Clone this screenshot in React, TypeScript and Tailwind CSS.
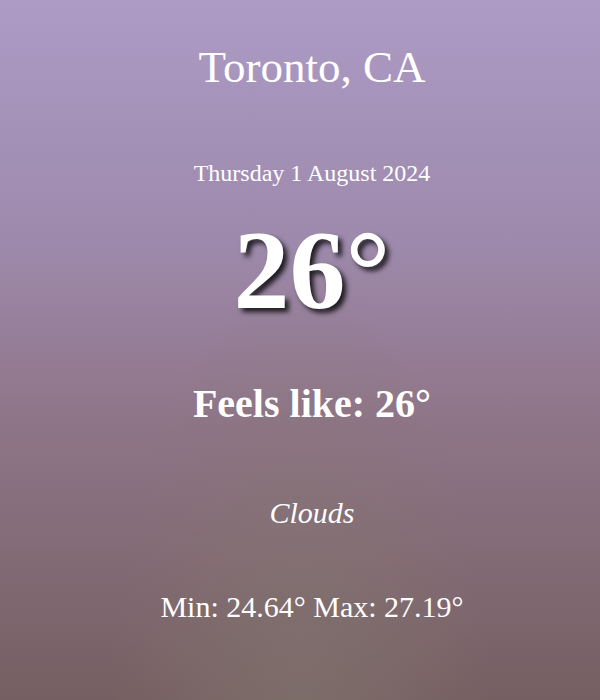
export default function App() {
  return (
    <div className="relative h-[700px] w-full overflow-hidden bg-[linear-gradient(180deg,#ad9bc6_0%,#9d89ab_35%,#8f7588_60%,#765f62_100%)] font-['Liberation_Serif','Times_New_Roman',serif] text-white">
      <div className="pointer-events-none absolute inset-0 bg-[radial-gradient(ellipse_at_50%_105%,rgba(130,120,110,0.6),transparent_45%)]" />
      <div className="relative flex flex-col items-center pl-[24px] text-center">
        <h1 className="mt-[45px] text-[45px] leading-none">Toronto, CA</h1>
        <p className="mt-[71px] text-[24px] leading-none">Thursday 1 August 2024</p>
        <p className="mt-[29px] text-[112px] font-bold leading-none [text-shadow:4px_4px_5px_rgba(0,0,0,0.8)]">
          26°
        </p>
        <p className="mt-[58px] text-[40px] font-bold leading-none">Feels like: 26°</p>
        <p className="mt-[74px] text-[30px] italic leading-none">Clouds</p>
        <p className="mt-[64px] text-[30px] leading-none">Min: 24.64° Max: 27.19°</p>
      </div>
    </div>
  );
}
